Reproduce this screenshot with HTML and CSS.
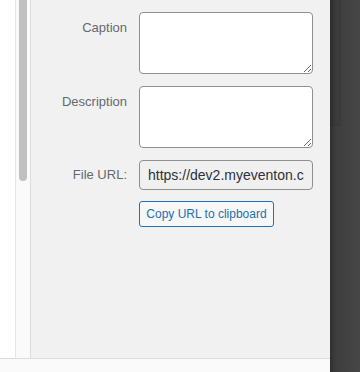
FILE: index.html
```html
<!DOCTYPE html>
<html>
<head>
    <link rel="stylesheet" href="styles.css">
</head>
<body>
    <div class="page">
        <div class="main">
            <div class="columns">
                <div class="blank"></div>
                <div class="track"><div class="thumb"></div></div>
                <div class="panel">
                    <div class="row">
                        <label class="label top">Caption</label>
                        <textarea class="area"></textarea>
                    </div>
                    <div class="row">
                        <label class="label top">Description</label>
                        <textarea class="area"></textarea>
                    </div>
                    <div class="row middle">
                        <label class="label">File URL:</label>
                        <input type="text" class="url" readonly value="https://dev2.myeventon.com/wp-content/uploads/2021/05/image.jpg">
                    </div>
                    <div class="row">
                        <span></span>
                        <div><button type="button" class="copy">Copy URL to clipboard</button></div>
                    </div>
                </div>
            </div>
            <div class="footer"></div>
        </div>
        <div class="side"><div class="side-top"></div></div>
    </div>
</body>
</html>
```

FILE: styles.css
```css
html, body {
    margin: 0;
    height: 100%;
}

body {
    font-family: "Liberation Sans", Arial, sans-serif;
    background-color: #fff;
}

.page {
    display: flex;
    height: 372px;
}

.main {
    width: 330px;
    display: flex;
    flex-direction: column;
}

.columns {
    flex: 1;
    display: flex;
}

.blank {
    width: 15px;
    background-color: #fff;
    border-right: 1px solid #e6e6e6;
}

.track {
    width: 15px;
    background-color: #fafafa;
    border-right: 1px solid #dcdcdc;
    padding: 0 3px;
    box-sizing: border-box;
}

.thumb {
    height: 181px;
    background-color: #c1c1c1;
    border-radius: 0 0 4px 4px;
}

.panel {
    flex: 1;
    background-color: #f1f1f1;
    padding: 12px 17px 0 0;
    display: flex;
    flex-direction: column;
    gap: 12px;
}

.row {
    display: grid;
    grid-template-columns: 96px 174px;
    column-gap: 12px;
}

.row.middle {
    align-items: center;
}

.label {
    text-align: right;
    font-size: 13px;
    line-height: 18px;
    color: #646970;
}

.label.top {
    padding-top: 7px;
}

.area {
    height: 62px;
    margin: 0;
    box-sizing: border-box;
    border: 1px solid #8c8f94;
    border-radius: 4px;
    background-color: #fff;
    resize: vertical;
}

.url {
    height: 30px;
    margin: 0;
    box-sizing: border-box;
    padding: 0 8px;
    border: 1px solid #8c8f94;
    border-radius: 4px;
    background-color: #f0f0f1;
    font-family: "Liberation Sans", Arial, sans-serif;
    font-size: 14px;
    color: #2c3338;
    width: 174px;
}

.copy {
    margin-top: -1px;
    height: 26px;
    width: 135px;
    padding: 0;
    border: 1px solid #2271b1;
    border-radius: 3px;
    background-color: #f6f7f7;
    color: #2271b1;
    font-family: "Liberation Sans", Arial, sans-serif;
    font-size: 12px;
    cursor: pointer;
}

.footer {
    height: 13px;
    background-color: #fafafa;
    border-top: 1px solid #dcdcdc;
}

.side {
    flex: 1;
    background: linear-gradient(to right, #2f2f2f, #3e3e3e 6px, #474747);
}

.side-top {
    width: 10px;
    height: 125px;
    background-color: rgba(0, 0, 0, 0.04);
    border-right: 1px solid rgba(0, 0, 0, 0.06);
    border-bottom: 1px solid rgba(0, 0, 0, 0.06);
}
```
